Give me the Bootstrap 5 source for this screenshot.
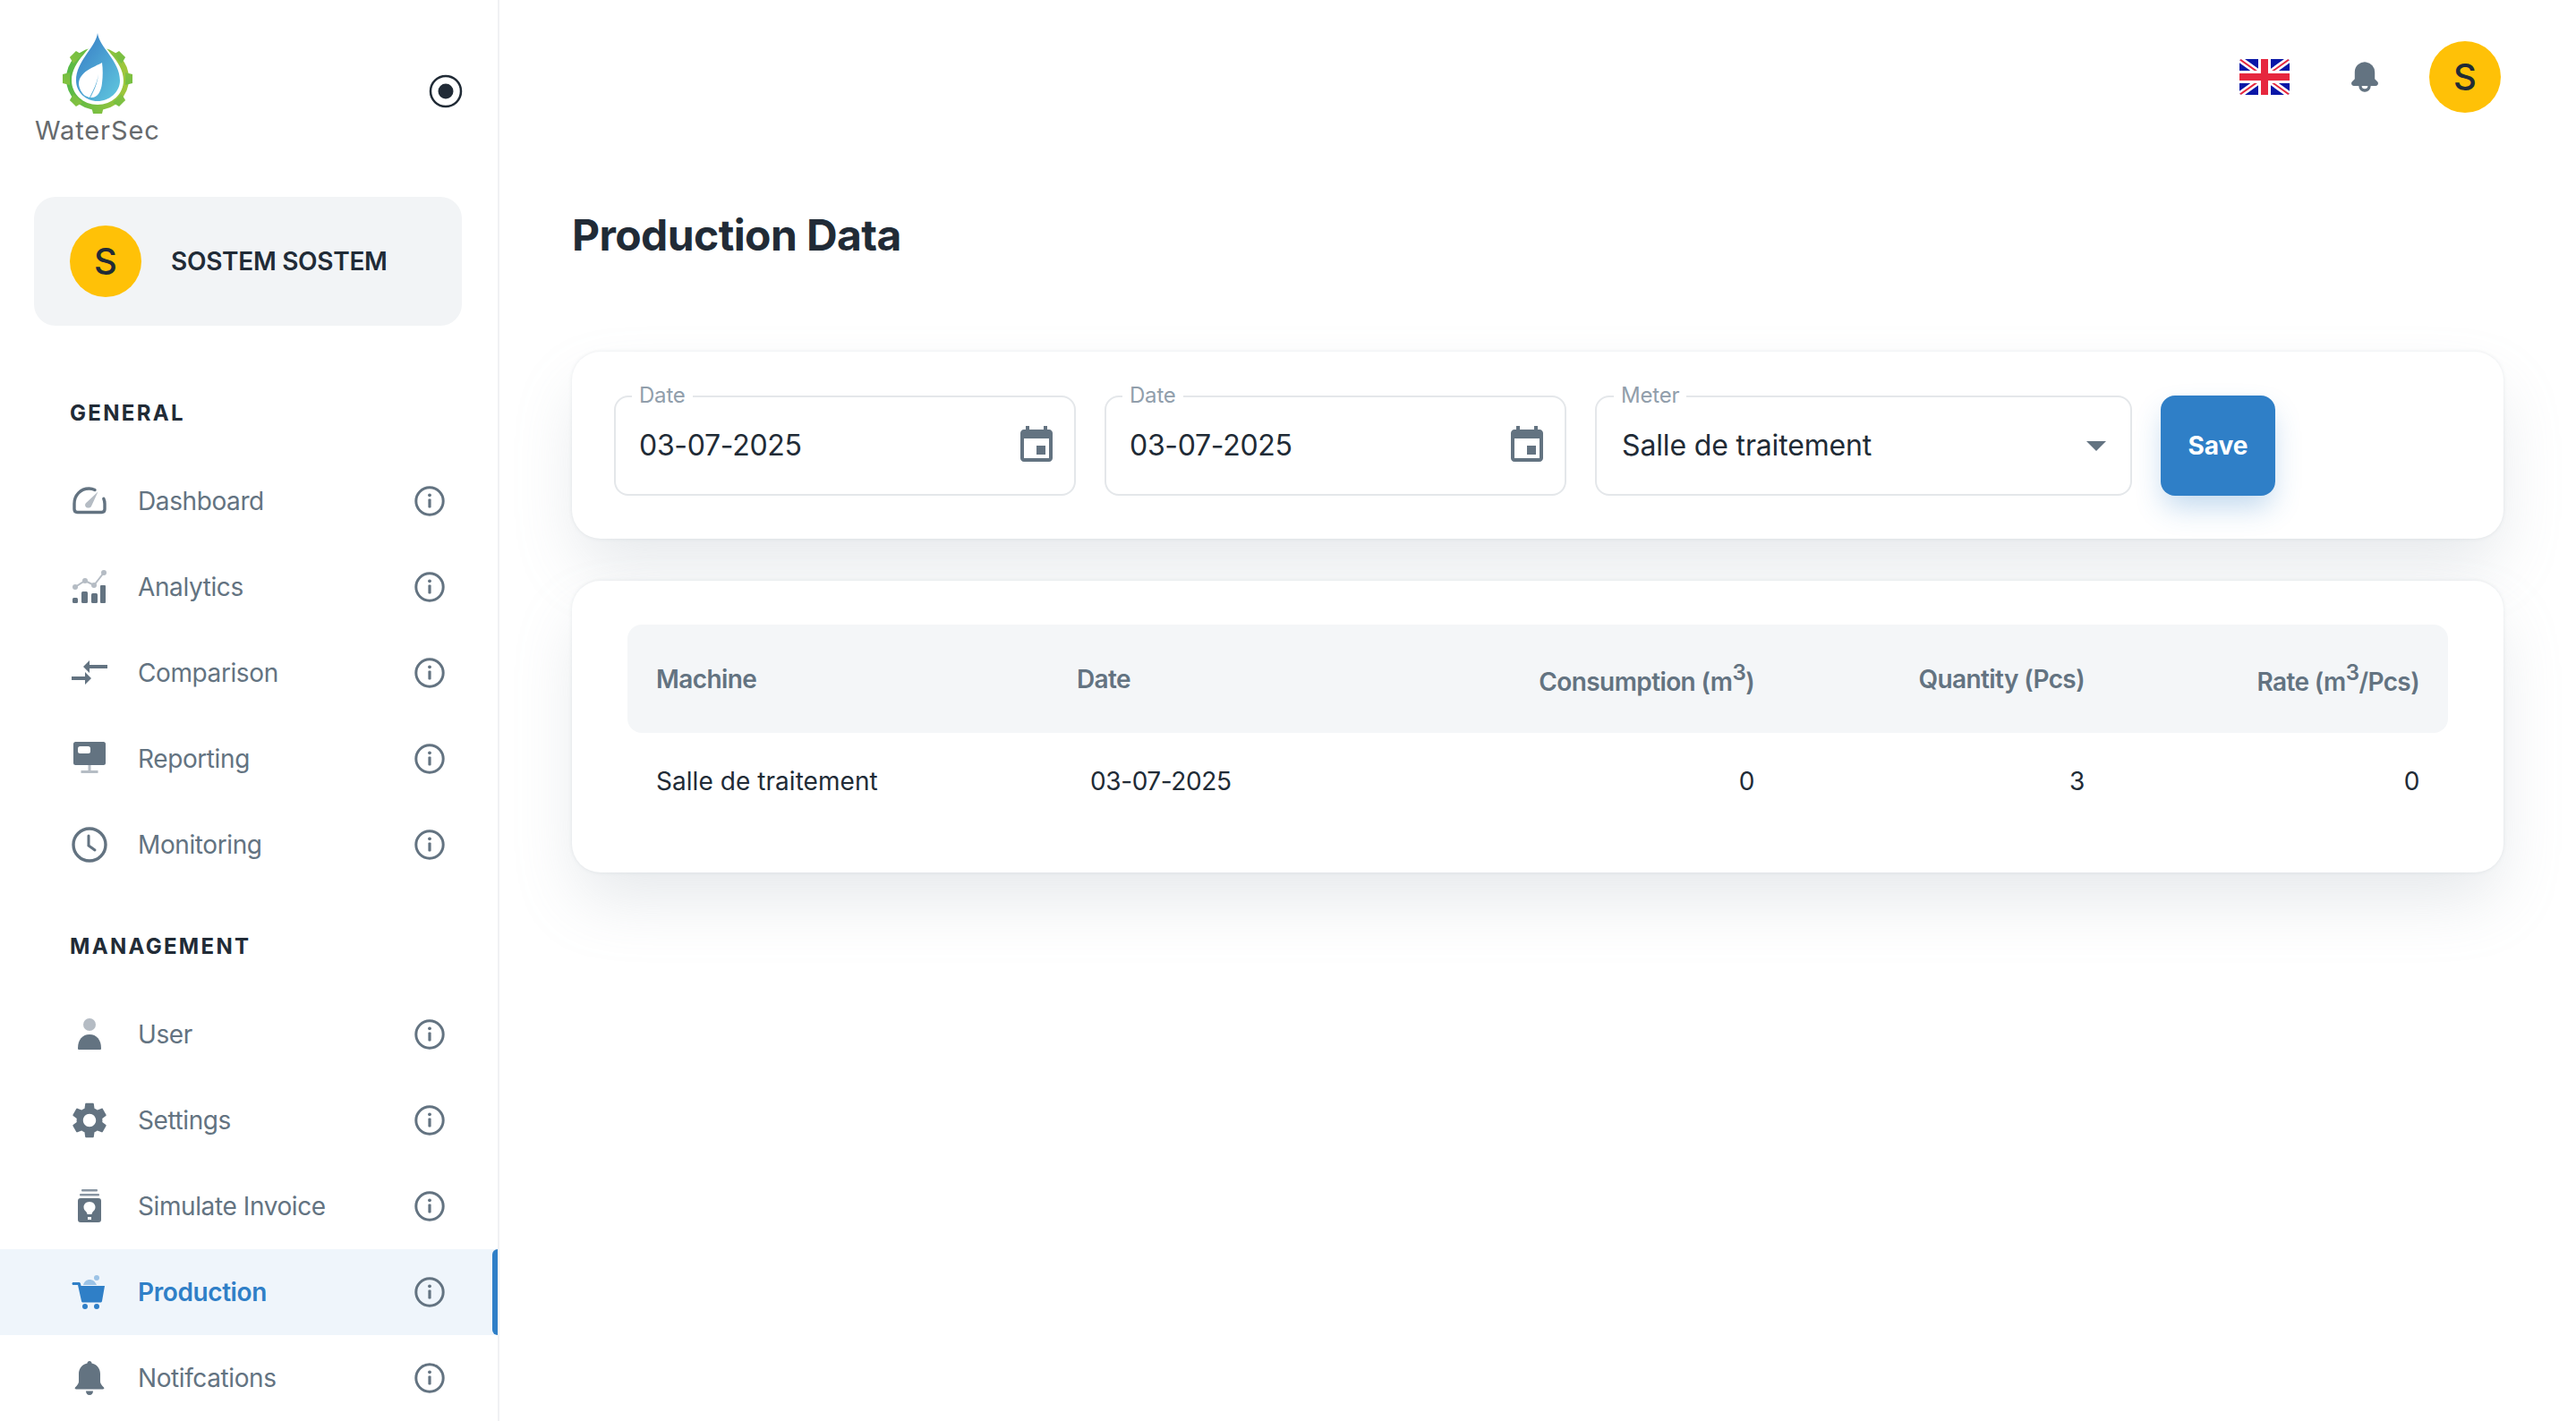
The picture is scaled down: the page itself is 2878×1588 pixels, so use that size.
<!DOCTYPE html>
<html lang="en">
<head>
<meta charset="utf-8">
<title>Production Data</title>
<link href="https://cdn.jsdelivr.net/npm/bootstrap@5.3.0/dist/css/bootstrap.min.css" rel="stylesheet">
<style>
html,body{height:100%}
body{font-family:"Inter","Liberation Sans",sans-serif;color:#212b36;background:#fff;overflow:hidden}
.app-shell{height:1588px;overflow:hidden}
.side{width:558px;flex:none;border-right:2px solid #f0f1f3;height:1588px;overflow:hidden}
.brand-row{height:220px;padding:37px 39px 0 39px}
.brand-name{font-size:29px;line-height:34px;letter-spacing:.9px;color:#666a6d;margin-top:2px}
.radio-ic{margin-top:46px}
.user-box{margin:0 40px 0 38px;height:144px;background:#f2f4f6;border-radius:24px;padding-left:40px;gap:33px}
.avatar-s{width:80px;height:80px;border-radius:50%;background:#ffc107;color:#212b36;font-size:40px;font-weight:500;line-height:1;flex:none}
.user-name{font-size:28px;font-weight:600;letter-spacing:-.3px}
.sec-title{font-size:24px;line-height:36px;font-weight:700;letter-spacing:2.3px;margin:48px 0 32px 78px;text-transform:uppercase}
.sec-first{margin-top:80px}
.nav-row{height:96px;padding:0 58px 0 80px;color:#637381;font-size:28px;letter-spacing:-.4px;text-decoration:none;position:relative}
.nav-ic{width:40px;height:40px;flex:none;margin-right:34px}
.nav-row.on{background:#eff5fb;color:#2f7fc7;font-weight:600}
.nav-row.on::after{content:"";position:absolute;right:0;top:0;bottom:0;width:6px;background:#2f7fc7;border-radius:6px 0 0 6px}
.main-col{padding:0 81px}
.top-bar{padding:46px 3px 0 0}
.flag-ic{width:56px;height:40px;border-radius:3px;margin-right:64px}
.bell-top{width:40px;height:40px;margin-right:52px}
.page-title{font-size:48px;line-height:72px;font-weight:700;margin:101px 0 94px;letter-spacing:-.6px}
.panel{border:0;border-radius:32px;background:#fff;box-shadow:0 0 4px rgba(145,158,171,.2),0 36px 72px -8px rgba(145,158,171,.24)}
.filter-panel{padding:49px 47px 48px;height:209px;margin-bottom:47px}
.filter-grid{display:grid;grid-template-columns:516px 516px 600px 128px;gap:32px}
.field-box{height:112px;border:2px solid #e4e7ea;border-radius:16px;padding:0 18px 0 26px;position:relative;font-size:32px;letter-spacing:-.3px;box-shadow:none}
.meter-box{padding-left:28px;padding-right:26px;letter-spacing:-.15px}
.field-lab{position:absolute;left:18px;top:-16px;font-size:24px;line-height:28px;color:#919eab;background:#fff;padding:0 8px;letter-spacing:-.2px}
.meter-box .field-lab{left:19px}
.save-btn{height:112px;border:0;border-radius:16px;background:#2f7fc7;font-size:28px;font-weight:700;color:#fff;box-shadow:0 16px 32px -4px rgba(47,127,199,.3);padding:0}
.data-panel{padding:49px 62px 48px;height:326px}
.data-tbl{margin:0;font-size:28px;table-layout:fixed;width:2034px}
.data-tbl th{background:#f4f6f8;color:#637381;font-weight:600;height:121px;padding:0 32px;vertical-align:middle;letter-spacing:-.6px}
.data-tbl th:first-child{border-radius:16px 0 0 16px}
.data-tbl th:last-child{border-radius:0 16px 16px 0}
.data-tbl td{height:108px;padding:0 32px;vertical-align:middle;color:#212b36;letter-spacing:-.4px}
.data-tbl td.name-td{letter-spacing:.05px}
.date-td{padding-left:47px !important}
.data-tbl sup{position:static;vertical-align:12px;line-height:1.5;font-size:86%}
</style>
</head>
<body>
<svg width="0" height="0" class="position-absolute">
  <defs>
    <symbol id="i-info" viewBox="0 0 36 36"><circle cx="18" cy="18" r="15.2" fill="none" stroke="#637381" stroke-width="3"/><rect x="16.4" y="15.5" width="3.2" height="10" rx="1" fill="#637381"/><circle cx="18" cy="11.3" r="1.9" fill="#637381"/></symbol>
    <symbol id="i-cal" viewBox="0 0 24 24"><path fill="#637381" d="M17 12h-5v5h5v-5zM16 1v2H8V1H6v2H5c-1.11 0-1.99.9-1.99 2L3 19c0 1.1.89 2 2 2h14c1.1 0 2-.9 2-2V5c0-1.1-.9-2-2-2h-1V1h-2zm3 18H5V8h14v11z"/></symbol>
    <linearGradient id="g-gear" gradientUnits="userSpaceOnUse" x1="0" y1="0" x2="80" y2="0"><stop offset="0" stop-color="#4fb848"/><stop offset="1" stop-color="#a9c83a"/></linearGradient>
    <linearGradient id="g-drop" gradientUnits="userSpaceOnUse" x1="16" y1="25" x2="65" y2="60"><stop offset="0" stop-color="#3d87c9"/><stop offset="1" stop-color="#5cc0dc"/></linearGradient>
  </defs>
</svg>
<div class="app-shell d-flex">
  <aside class="side d-flex flex-column">
    <div class="brand-row d-flex justify-content-between align-items-start">
      <div class="d-flex flex-column align-items-center">
        <svg width="80" height="90" viewBox="0 0 80 90">
          <g fill="url(#g-gear)">
            <circle cx="40" cy="51" r="31" fill="none" stroke="url(#g-gear)" stroke-width="8"/>
            <path d="M33 82h14l-2 8h-10z"/>
            <path d="M33 82h14l-2 8h-10z" transform="rotate(45 40 51)"/>
            <path d="M33 82h14l-2 8h-10z" transform="rotate(90 40 51)"/>
            <path d="M33 82h14l-2 8h-10z" transform="rotate(135 40 51)"/>
            <path d="M33 82h14l-2 8h-10z" transform="rotate(-45 40 51)"/>
            <path d="M33 82h14l-2 8h-10z" transform="rotate(-90 40 51)"/>
            <path d="M33 82h14l-2 8h-10z" transform="rotate(-135 40 51)"/>
          </g>
          <path fill="#fff" d="M40 0C37 16 11 30 11 53c0 15 13 27 29 27s29-12 29-27C69 30 43 16 40 0z"/>
          <path fill="url(#g-drop)" d="M40 0c-2 16-24 31-24 53 0 13 11 23 24 23s25-10 25-23C65 31 42 16 40 0z"/>
          <path fill="#fff" d="M45 33C36 38 20 43 19 56c0 5 3 11 7 14l5 2 4-8c3-6 5-12 6-18-1 8-3 14-6 20l-3 6c8 1 12-7 13-16 1-8 1-16 0-23z"/>
        </svg>
        <div class="brand-name">WaterSec</div>
      </div>
      <svg class="radio-ic" width="38" height="38" viewBox="0 0 38 38"><circle cx="19" cy="19" r="17" fill="none" stroke="#212b36" stroke-width="2.5"/><circle cx="19" cy="19" r="8.5" fill="#212b36"/></svg>
    </div>
    <div class="user-box d-flex align-items-center">
      <div class="avatar-s d-flex align-items-center justify-content-center">S</div>
      <div class="user-name">SOSTEM SOSTEM</div>
    </div>
    <div class="sec-title sec-first">General</div>
    <a class="nav-row d-flex align-items-center" href="#">
      <svg class="nav-ic" viewBox="0 0 40 40"><path fill="none" stroke="#637381" stroke-width="3.4" stroke-linecap="round" d="M26 7.500C23.800 6.500 21.500 6 19.500 6 10 6 3 13.500 3 23v6c0 2 1 3.500 3.500 3.500h27c2.500 0 3.500-1.500 3.500-3.500v-6c0-2-.4-4-1.200-5.800"/><path fill="#b5bcc4" d="M29.500 9.500 21.800 26.200c-1.500 2-5 1.800-6.300-.2-1-1.700-.3-3.800 1.500-4.800z"/></svg>
      <span class="flex-grow-1">Dashboard</span>
      <svg width="36" height="36"><use href="#i-info"/></svg>
    </a>
    <a class="nav-row d-flex align-items-center" href="#">
      <svg class="nav-ic" viewBox="0 0 40 40"><path fill="none" stroke="#b5bcc4" stroke-width="2" d="M4 20 15 13l10 5 11-14"/><g fill="#b5bcc4"><circle cx="4" cy="20" r="3"/><circle cx="15" cy="13" r="3"/><circle cx="25" cy="18" r="3"/><circle cx="36" cy="4" r="3"/></g><g fill="#637381"><rect x="1" y="32" width="6" height="6" rx="1.500"/><rect x="11" y="25" width="7" height="13" rx="1.500"/><rect x="22" y="27" width="7" height="11" rx="1.500"/><rect x="32" y="18" width="6" height="20" rx="1"/></g></svg>
      <span class="flex-grow-1">Analytics</span>
      <svg width="36" height="36"><use href="#i-info"/></svg>
    </a>
    <a class="nav-row d-flex align-items-center" href="#">
      <svg class="nav-ic" viewBox="0 0 40 40"><path fill="#637381" d="M20 6v5h20v4H20v5l-7-7zM0 24h15v-5l7 7-7 7v-5H0z"/></svg>
      <span class="flex-grow-1">Comparison</span>
      <svg width="36" height="36"><use href="#i-info"/></svg>
    </a>
    <a class="nav-row d-flex align-items-center" href="#">
      <svg class="nav-ic" viewBox="0 0 40 40"><rect x="2" y="1" width="36" height="26" rx="2.500" fill="#637381"/><rect x="7" y="6" width="14" height="8" rx="2.500" fill="#fff"/><path fill="#b5bcc4" d="M18.500 27h3v6h8v3h-19v-3h8z"/></svg>
      <span class="flex-grow-1">Reporting</span>
      <svg width="36" height="36"><use href="#i-info"/></svg>
    </a>
    <a class="nav-row d-flex align-items-center" href="#">
      <svg class="nav-ic" viewBox="0 0 40 40"><circle cx="20" cy="20" r="18" fill="none" stroke="#637381" stroke-width="3.400"/><path fill="none" stroke="#637381" stroke-width="3" stroke-linecap="round" d="M19 10v11l7 5"/></svg>
      <span class="flex-grow-1">Monitoring</span>
      <svg width="36" height="36"><use href="#i-info"/></svg>
    </a>
    <div class="sec-title">Management</div>
    <a class="nav-row d-flex align-items-center" href="#">
      <svg class="nav-ic" viewBox="0 0 40 40"><circle cx="20" cy="9" r="7" fill="#b5bcc4"/><path fill="#637381" d="M7 35.500C7 26 12 20 20 20s13 6 13 15.500c0 1-.5 1.500-1.500 1.500h-23C7.500 37 7 36.500 7 35.500z"/></svg>
      <span class="flex-grow-1">User</span>
      <svg width="36" height="36"><use href="#i-info"/></svg>
    </a>
    <a class="nav-row d-flex align-items-center" href="#">
      <svg class="nav-ic" viewBox="2 2 20 20"><path fill="#637381" d="M19.140 12.940c.04-.3.06-.61.06-.94 0-.32-.02-.64-.07-.94l2.030-1.580c.18-.14.23-.41.12-.61l-1.920-3.320c-.12-.22-.37-.29-.59-.22l-2.390.96c-.5-.38-1.030-.7-1.620-.94l-.36-2.540c-.04-.24-.24-.41-.48-.41h-3.840c-.24 0-.43.17-.47.41l-.36 2.540c-.59.24-1.130.57-1.620.94l-2.390-.96c-.22-.08-.47 0-.59.22L2.740 8.870c-.12.21-.08.47.12.61l2.030 1.580c-.05.3-.09.63-.09.94s.02.64.07.94l-2.030 1.580c-.18.14-.23.41-.12.61l1.920 3.320c.12.22.37.29.59.22l2.390-.96c.5.38 1.030.7 1.620.94l.36 2.540c.05.24.24.41.48.41h3.840c.24 0 .44-.17.47-.41l.36-2.540c.59-.24 1.130-.56 1.620-.94l2.390.96c.22.08.47 0 .59-.22l1.920-3.320c.12-.22.07-.47-.12-.61l-2.010-1.580zM12 15.600c-1.980 0-3.600-1.620-3.600-3.600s1.620-3.600 3.600-3.600 3.600 1.620 3.600 3.600-1.620 3.600-3.600 3.600z"/></svg>
      <span class="flex-grow-1">Settings</span>
      <svg width="36" height="36"><use href="#i-info"/></svg>
    </a>
    <a class="nav-row d-flex align-items-center" href="#">
      <svg class="nav-ic" viewBox="0 0 40 40"><rect x="11" y="1" width="18" height="2.500" rx="1" fill="#8794a1"/><rect x="9" y="6" width="22" height="2.500" rx="1" fill="#8794a1"/><path fill="#637381" fill-rule="evenodd" d="M10 11h20c2 0 3 1 3 3v21c0 2-1 3-3 3H10c-2 0-3-1-3-3V14c0-2 1-3 3-3zm10 4c-4 0-6.500 2.800-6.500 6 0 2.500 1.500 4 3 5.500.7.7.9 1.500 1 2.500h5c.1-1 .3-1.800 1-2.500 1.500-1.500 3-3 3-5.500 0-3.200-2.500-6-6.500-6zm-2 17v3h4v-3z"/></svg>
      <span class="flex-grow-1">Simulate Invoice</span>
      <svg width="36" height="36"><use href="#i-info"/></svg>
    </a>
    <a class="nav-row on d-flex align-items-center" href="#">
      <svg class="nav-ic" viewBox="0 0 40 40"><path fill="#2f7fc7" d="M2 9h6c1 0 1.800.5 2 1.500L10.500 13H37l-3 17c-.2 1-1 1.500-2 1.500H13c-1 0-1.800-.5-2-1.500L7 12H2c-1 0-1.500-.7-1.500-1.500S1 9 2 9z"/><circle cx="15" cy="36" r="3" fill="#2f7fc7"/><circle cx="28" cy="36" r="3" fill="#2f7fc7"/><path fill="#9cc3e6" d="M13 12c1-4 4-6 7-6 4 0 6 2 8 6z"/><circle cx="28" cy="4" r="3" fill="#9cc3e6"/></svg>
      <span class="flex-grow-1">Production</span>
      <svg width="36" height="36"><use href="#i-info"/></svg>
    </a>
    <a class="nav-row d-flex align-items-center" href="#">
      <svg class="nav-ic" viewBox="0 0 40 40"><path fill="#637381" d="M20 1c1.500 0 2.500 1 2.500 2.500 6 1.200 9.500 6 9.500 12V24c0 2 1.500 4 4 6.500 .8.800 .2 2-1 2H5c-1.200 0-1.800-1.200-1-2 2.500-2.500 4-4.500 4-6.500v-8.500c0-6 3.500-10.800 9.500-12C17.500 2 18.500 1 20 1zM16 34.500h8c0 2.500-1.500 4.500-4 4.500s-4-2-4-4.500z"/></svg>
      <span class="flex-grow-1">Notifcations</span>
      <svg width="36" height="36"><use href="#i-info"/></svg>
    </a>
  </aside>
  <main class="main-col flex-grow-1">
    <div class="top-bar d-flex justify-content-end align-items-center">
      <svg class="flag-ic" viewBox="0 0 56 40" preserveAspectRatio="none">
        <rect width="56" height="40" fill="#0a17a7"/>
        <path stroke="#fff" stroke-width="7" d="M0 0 56 40M56 0 0 40"/>
        <path stroke="#e6273e" stroke-width="2" d="M0 0 56 40M56 0 0 40"/>
        <rect x="21" width="14" height="40" fill="#fff"/><rect y="13" width="56" height="14" fill="#fff"/>
        <rect x="24" width="8" height="40" fill="#e6273e"/><rect y="16" width="56" height="8" fill="#e6273e"/>
      </svg>
      <svg class="bell-top" viewBox="0 0 24 24"><path fill="#637381" d="M20.520 15.210l-1.800-1.810V8.940a6.860 6.860 0 0 0-5.820-6.880 6.740 6.740 0 0 0-7.620 6.670v4.670l-1.800 1.810A1.640 1.640 0 0 0 4.640 18H8v.34A3.840 3.840 0 0 0 12 22a3.840 3.840 0 0 0 4-3.660V18h3.360a1.640 1.640 0 0 0 1.160-2.790zM14 18.340A1.880 1.880 0 0 1 12 20a1.880 1.880 0 0 1-2-1.660V18h4z"/></svg>
      <div class="avatar-s d-flex align-items-center justify-content-center">S</div>
    </div>
    <h1 class="page-title">Production Data</h1>
    <div class="card panel filter-panel">
      <div class="filter-grid">
        <div class="field-box d-flex align-items-center justify-content-between">
          <span class="field-lab">Date</span><span>03-07-2025</span>
          <svg width="48" height="48"><use href="#i-cal"/></svg>
        </div>
        <div class="field-box d-flex align-items-center justify-content-between">
          <span class="field-lab">Date</span><span>03-07-2025</span>
          <svg width="48" height="48"><use href="#i-cal"/></svg>
        </div>
        <div class="field-box meter-box d-flex align-items-center justify-content-between">
          <span class="field-lab">Meter</span><span>Salle de traitement</span>
          <svg width="24" height="12" viewBox="0 0 24 12"><path fill="#637381" d="M1 1h22L12 12z"/></svg>
        </div>
        <button type="button" class="btn save-btn">Save</button>
      </div>
    </div>
    <div class="card panel data-panel">
      <table class="table table-borderless data-tbl">
        <colgroup><col style="width:470px"><col style="width:400px"><col style="width:421px"><col style="width:369px"><col style="width:374px"></colgroup>
        <thead>
          <tr><th>Machine</th><th>Date</th><th class="text-end">Consumption (m<sup>3</sup>)</th><th class="text-end">Quantity (Pcs)</th><th class="text-end">Rate (m<sup>3</sup>/Pcs)</th></tr>
        </thead>
        <tbody>
          <tr><td class="name-td">Salle de traitement</td><td class="date-td">03-07-2025</td><td class="text-end">0</td><td class="text-end">3</td><td class="text-end">0</td></tr>
        </tbody>
      </table>
    </div>
  </main>
</div>
<script src="https://cdn.jsdelivr.net/npm/bootstrap@5.3.0/dist/js/bootstrap.bundle.min.js"></script>
</body>
</html>
